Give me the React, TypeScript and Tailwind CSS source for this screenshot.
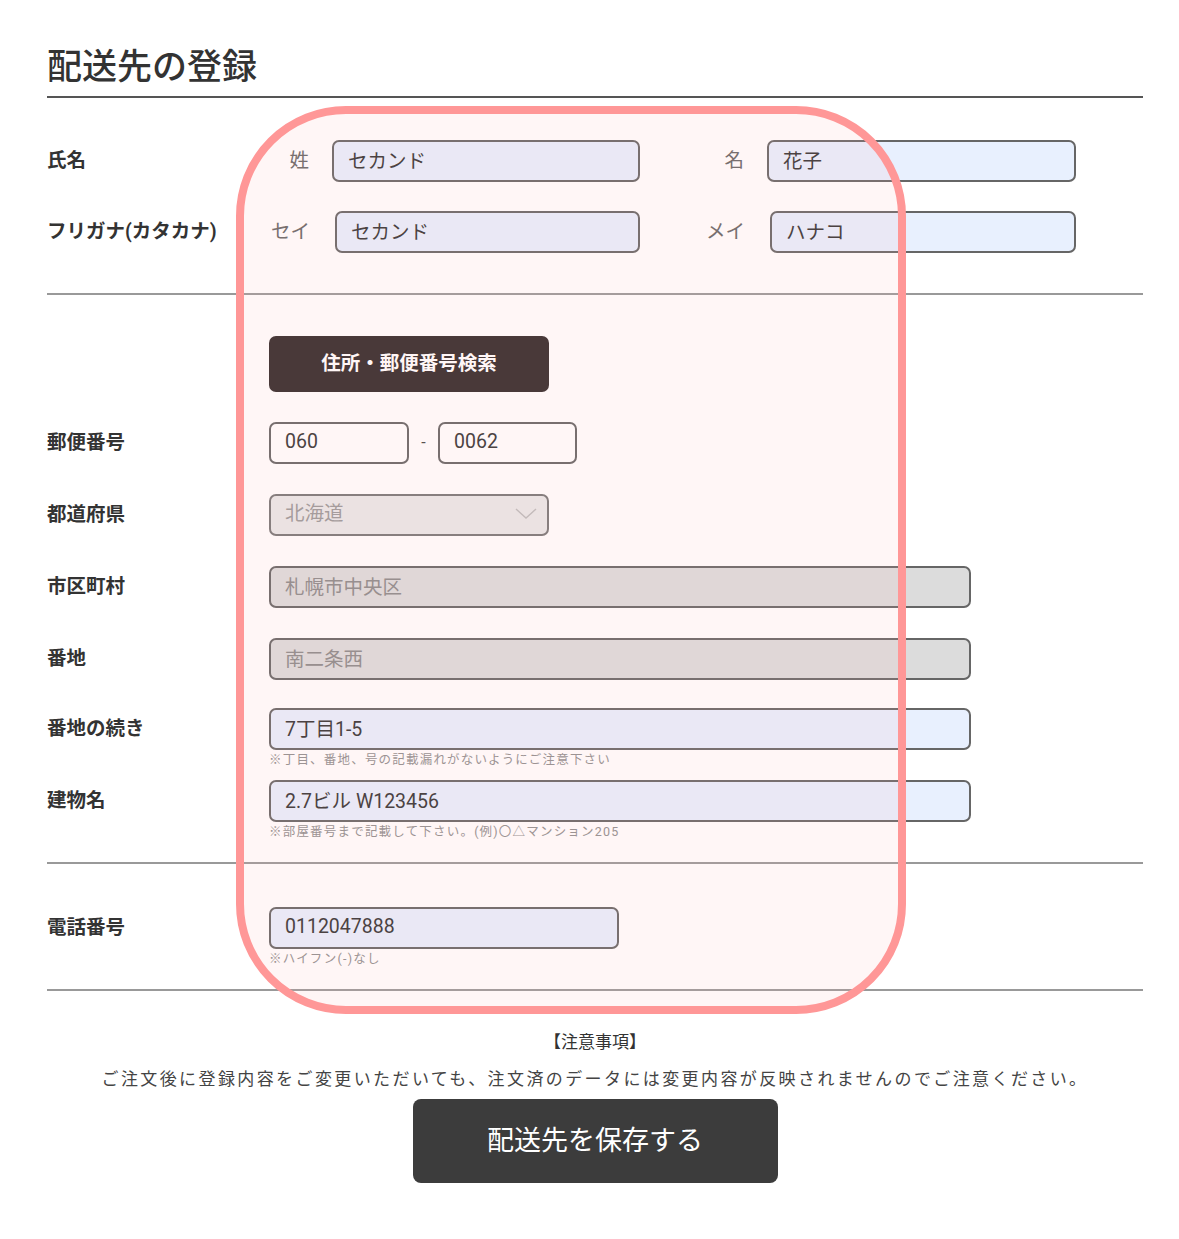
import React from 'react';

const inputBase =
  'h-[42px] rounded-[7px] border-2 border-[#666] px-[14px] pb-[4px] text-[19.5px] outline-none';

function Field({ value, w, tone = 'blue' }: { value: string; w: string; tone?: 'blue' | 'white' | 'gray' }) {
  const bg =
    tone === 'blue'
      ? 'bg-[#e8f0fe] text-[#333]'
      : tone === 'gray'
        ? 'bg-[#dcdcdc] text-[#8a8a8a]'
        : 'bg-white text-[#333]';
  return <input readOnly value={value} className={`${inputBase} ${bg} ${w}`} />;
}

function Label({ children }: { children: React.ReactNode }) {
  return <div className="w-[222px] shrink-0 text-[19.5px] font-bold text-[#333]">{children}</div>;
}

function Note({ children }: { children: React.ReactNode }) {
  return (
    <div className="ml-[222px] h-[20px] text-[12.5px] leading-[20px] tracking-[1.2px] text-[#8f8f8f]">
      {children}
    </div>
  );
}

export default function App() {
  return (
    <div className="relative min-h-[1239px] w-[1179px] bg-white font-[Roboto,'Noto_Sans_CJK_JP',sans-serif] text-[#333]">
      <div className="w-[1096px] ml-[47px] pt-[44px]">
        {/* title */}
        <h1 className="h-[48px] text-[35px] font-medium leading-[48px] text-[#333]">配送先の登録</h1>
        <div className="mt-[4px] h-[2px] bg-[#555]" />

        {/* name */}
        <div className="mt-[42px] flex items-center">
          <Label>氏名</Label>
          <span className="w-[40px] text-right text-[19.5px] text-[#666]">姓</span>
          <Field value="セカンド" w="ml-[23px] w-[308px]" />
          <span className="w-[104px] text-right text-[19.5px] text-[#666]">名</span>
          <Field value="花子" w="ml-[23px] w-[309px]" />
        </div>
        <div className="mt-[29px] flex items-center">
          <Label>フリガナ(カタカナ)</Label>
          <span className="w-[41px] text-right text-[19.5px] text-[#666]">セイ</span>
          <Field value="セカンド" w="ml-[25px] w-[305px]" />
          <span className="w-[105px] text-right text-[19.5px] text-[#666]">メイ</span>
          <Field value="ハナコ" w="ml-[25px] w-[306px]" />
        </div>
        <div className="mt-[40px] h-[2px] bg-[#999]" />

        {/* address */}
        <div className="mt-[41px] flex">
          <div className="w-[222px]" />
          <button className="h-[56px] w-[280px] rounded-[7px] bg-[#302828] text-[19.5px] font-bold text-white">
            住所・郵便番号検索
          </button>
        </div>
        <div className="mt-[30px] flex items-center">
          <Label>郵便番号</Label>
          <Field value="060" w="w-[140px]" tone="white" />
          <span className="w-[29px] text-center text-[16px] text-[#444]">-</span>
          <Field value="0062" w="w-[139px]" tone="white" />
        </div>
        <div className="mt-[30px] flex items-center">
          <Label>都道府県</Label>
          <div className="flex h-[42px] w-[280px] items-center justify-between rounded-[7px] border-2 border-[#777] bg-[#e9e9e9] pb-[3px] pl-[14px] pr-[10px]">
            <span className="text-[19.5px] text-[#999]">北海道</span>
            <svg width="22" height="12" viewBox="0 0 22 12" fill="none">
              <path d="M1 1 L11 10 L21 1" stroke="#bbb" strokeWidth="1.4" />
            </svg>
          </div>
        </div>
        <div className="mt-[30px] flex items-center">
          <Label>市区町村</Label>
          <Field value="札幌市中央区" w="w-[702px]" tone="gray" />
        </div>
        <div className="mt-[30px] flex items-center">
          <Label>番地</Label>
          <Field value="南二条西" w="w-[702px]" tone="gray" />
        </div>
        <div className="mt-[28px] flex items-center">
          <Label>番地の続き</Label>
          <Field value="7丁目1-5" w="w-[702px]" />
        </div>
        <Note>※丁目、番地、号の記載漏れがないようにご注意下さい</Note>
        <div className="mt-[10px] flex items-center">
          <Label>建物名</Label>
          <Field value="2.7ビル W123456" w="w-[702px]" />
        </div>
        <Note>※部屋番号まで記載して下さい。(例)〇△マンション205</Note>
        <div className="mt-[20px] h-[2px] bg-[#999]" />

        {/* phone */}
        <div className="mt-[43px] flex items-center">
          <Label>電話番号</Label>
          <Field value="0112047888" w="w-[350px]" />
        </div>
        <Note>※ハイフン(-)なし</Note>
        <div className="mt-[20px] h-[2px] bg-[#999]" />

        {/* notice */}
        <div className="mt-[39px] text-center text-[17px] leading-[24px] text-[#333]">【注意事項】</div>
        <div className="mt-[13px] text-center text-[17px] leading-[24px] tracking-[2.4px] text-[#444]">
          ご注文後に登録内容をご変更いただいても、注文済のデータには変更内容が反映されませんのでご注意ください。
        </div>
        <div className="mt-[8px] flex justify-center">
          <button className="h-[84px] w-[365px] rounded-[8px] bg-[#3c3c3c] text-[27px] text-white">
            配送先を保存する
          </button>
        </div>
      </div>

      {/* highlight annotation */}
      <div className="pointer-events-none absolute left-[236px] top-[106px] z-10 h-[908px] w-[670px] rounded-[110px] border-[8px] border-[#ff9797] bg-[rgba(255,180,180,0.12)]" />
    </div>
  );
}
